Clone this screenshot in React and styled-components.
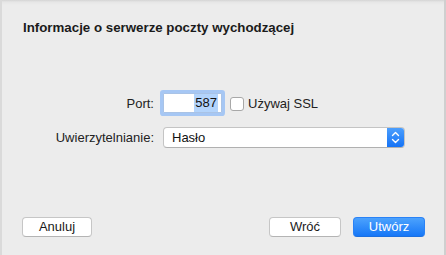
import React from 'react';
import styled, { createGlobalStyle } from 'styled-components';

const GlobalStyle = createGlobalStyle`
  html, body {
    margin: 0;
    padding: 0;
    background: #ececec;
  }
  body {
    font-family: "Liberation Sans", Arial, sans-serif;
    -webkit-font-smoothing: antialiased;
  }
`;

const Sheet = styled.div`
  background: linear-gradient(to bottom, #d4d4d4 0, #e6e6e6 2px, #ececec 5px, #ececec 100%);
  border-left: 2px solid #dadada;
  border-right: 2px solid #cfcfcf;
  box-sizing: border-box;
  display: flex;
  flex-direction: column;
  height: 255px;
  padding: 20px 19px 18px 20px;
  width: 446px;
`;

const Title = styled.h1`
  color: #1b1b1b;
  font-size: 13.3px;
  font-weight: bold;
  line-height: 16px;
  margin: 0 0 0 1px;
`;

const Form = styled.div`
  align-items: center;
  column-gap: 9px;
  display: grid;
  grid-template-columns: 132px auto;
  margin-top: 57px;
  row-gap: 14px;
`;

const Label = styled.span`
  color: #222;
  font-size: 13px;
  text-align: right;
`;

const Controls = styled.div`
  align-items: center;
  display: flex;
`;

const Field = styled.div`
  background: #fff;
  border: 1px solid #a9c3e6;
  border-radius: 1px;
  box-shadow: 0 0 0 3px #a6c7f4;
  box-sizing: border-box;
  color: #111;
  font-size: 13px;
  height: 20px;
  line-height: 18px;
  padding-right: 3px;
  text-align: right;
  width: 59px;
`;

const Selected = styled.span`
  background: #b3d4fc;
  display: inline-block;
  padding: 0 1px;
`;

const Check = styled.span`
  background: #fff;
  border: 1px solid #a8a8a8;
  border-radius: 3px;
  box-sizing: border-box;
  display: inline-block;
  height: 14px;
  margin: 2px 4px 0 8px;
  width: 14px;
`;

const CheckText = styled.span`
  color: #222;
  font-size: 13px;
`;

const Select = styled.div`
  align-items: stretch;
  background: #fff;
  border: 1px solid #c4c4c4;
  border-bottom-color: #b0b0b0;
  border-radius: 4px;
  box-sizing: border-box;
  display: flex;
  height: 21px;
  overflow: hidden;
  width: 242px;
`;

const SelectValue = styled.span`
  color: #111;
  flex: 1;
  font-size: 13px;
  line-height: 19px;
  padding-left: 8px;
`;

const Arrows = styled.span`
  align-items: center;
  background: linear-gradient(to bottom, #4b9efd, #1573f6);
  display: flex;
  justify-content: center;
  width: 17px;
`;

const Footer = styled.div`
  align-items: center;
  display: flex;
  gap: 12px;
  margin-top: auto;
`;

const Spacer = styled.div`
  flex: 1;
`;

const Button = styled.button`
  background: ${props => (props.primary ? 'linear-gradient(to bottom, #4ca2fd, #1677f7)' : '#fff')};
  border: 1px solid ${props => (props.primary ? '#2a82f6' : '#c6c6c6')};
  border-bottom-color: ${props => (props.primary ? '#1b6fe0' : '#b4b4b4')};
  border-radius: 4px;
  box-sizing: border-box;
  color: ${props => (props.primary ? '#fff' : '#1a1a1a')};
  font-family: inherit;
  font-size: 13px;
  height: 20px;
  line-height: 18px;
  padding: 0;
  width: ${props => props.width}px;
`;

const App = () => (
  <>
    <GlobalStyle />
    <Sheet>
      <Title>Informacje o serwerze poczty wychodzącej</Title>
      <Form>
        <Label>Port:</Label>
        <Controls>
          <Field>
            <Selected>587</Selected>
          </Field>
          <Check />
          <CheckText>Używaj SSL</CheckText>
        </Controls>
        <Label>Uwierzytelnianie:</Label>
        <Controls>
          <Select>
            <SelectValue>Hasło</SelectValue>
            <Arrows>
              <svg width="9" height="13" viewBox="0 0 9 13" fill="none" stroke="#fff" strokeWidth="1.4" strokeLinecap="round" strokeLinejoin="round">
                <path d="M1.5 4.5 L4.5 1.5 L7.5 4.5" />
                <path d="M1.5 8.5 L4.5 11.5 L7.5 8.5" />
              </svg>
            </Arrows>
          </Select>
        </Controls>
      </Form>
      <Footer>
        <Button width={70}>Anuluj</Button>
        <Spacer />
        <Button width={72}>Wróć</Button>
        <Button width={72} primary>Utwórz</Button>
      </Footer>
    </Sheet>
  </>
);

export default App;
